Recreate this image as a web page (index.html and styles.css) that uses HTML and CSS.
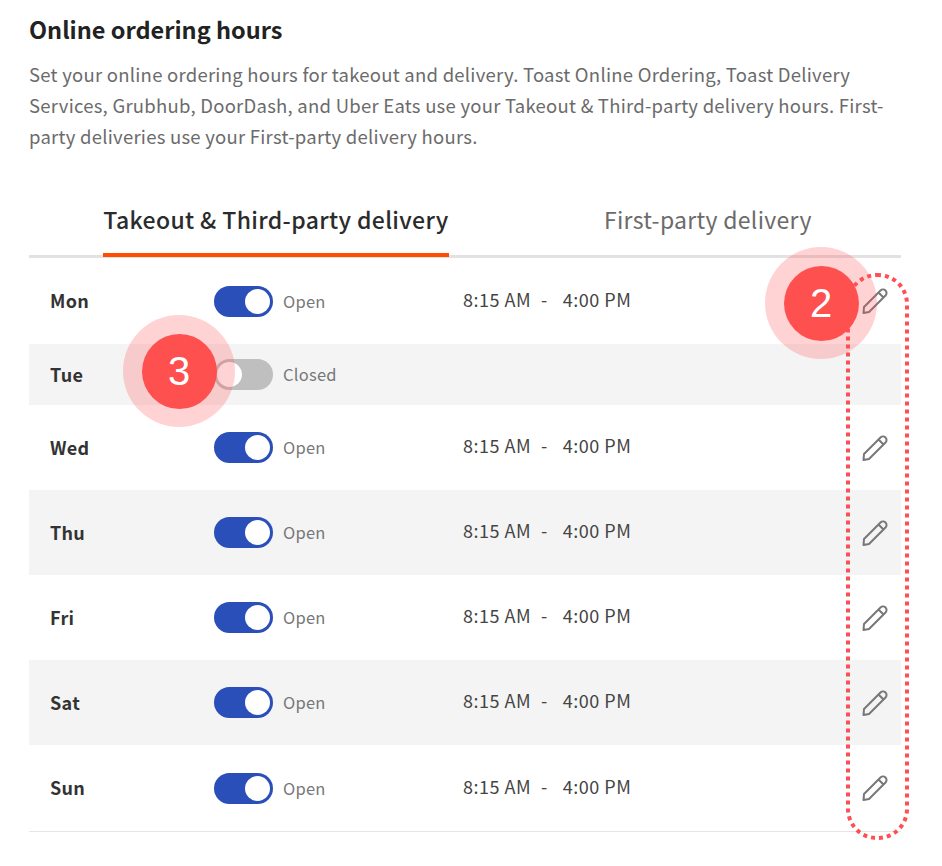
FILE: index.html
```html
<!DOCTYPE html>
<html lang="en">

<head>
    <meta charset="UTF-8">
    <meta name="viewport" content="width=device-width, initial-scale=1.0">
    <title>Online ordering hours</title>
    <link rel="stylesheet" href="styles.css">
</head>

<body>
    <div class="content">
        <h2>Online ordering hours</h2>
        <p class="intro">Set your online ordering hours for takeout and delivery. Toast Online Ordering, Toast Delivery Services, Grubhub, DoorDash, and Uber Eats use your Takeout &amp; Third-party delivery hours. First-party deliveries use your First-party delivery hours.</p>

        <div class="tabs">
            <div class="tab active">Takeout &amp; Third-party delivery</div>
            <div class="tab">First-party delivery</div>
        </div>

        <div class="hours">
            <div class="row">
                <span class="day">Mon</span>
                <div class="status"><span class="toggle on"></span><span class="status-text">Open</span></div>
                <div class="times"><span>8:15 AM</span><span class="dash">-</span><span>4:00 PM</span></div>
                <svg class="pencil" viewBox="0 0 26 26"><path d="M1.5 25 L2 19 L18.5 2.5 a3.2 3.2 0 0 1 5 5 L7 24 Z M16.5 4.5 L21.5 9.5" /></svg>
            </div>
            <div class="row closed">
                <span class="day">Tue</span>
                <div class="status"><span class="toggle"></span><span class="status-text">Closed</span></div>
            </div>
            <div class="row">
                <span class="day">Wed</span>
                <div class="status"><span class="toggle on"></span><span class="status-text">Open</span></div>
                <div class="times"><span>8:15 AM</span><span class="dash">-</span><span>4:00 PM</span></div>
                <svg class="pencil" viewBox="0 0 26 26"><path d="M1.5 25 L2 19 L18.5 2.5 a3.2 3.2 0 0 1 5 5 L7 24 Z M16.5 4.5 L21.5 9.5" /></svg>
            </div>
            <div class="row">
                <span class="day">Thu</span>
                <div class="status"><span class="toggle on"></span><span class="status-text">Open</span></div>
                <div class="times"><span>8:15 AM</span><span class="dash">-</span><span>4:00 PM</span></div>
                <svg class="pencil" viewBox="0 0 26 26"><path d="M1.5 25 L2 19 L18.5 2.5 a3.2 3.2 0 0 1 5 5 L7 24 Z M16.5 4.5 L21.5 9.5" /></svg>
            </div>
            <div class="row">
                <span class="day">Fri</span>
                <div class="status"><span class="toggle on"></span><span class="status-text">Open</span></div>
                <div class="times"><span>8:15 AM</span><span class="dash">-</span><span>4:00 PM</span></div>
                <svg class="pencil" viewBox="0 0 26 26"><path d="M1.5 25 L2 19 L18.5 2.5 a3.2 3.2 0 0 1 5 5 L7 24 Z M16.5 4.5 L21.5 9.5" /></svg>
            </div>
            <div class="row">
                <span class="day">Sat</span>
                <div class="status"><span class="toggle on"></span><span class="status-text">Open</span></div>
                <div class="times"><span>8:15 AM</span><span class="dash">-</span><span>4:00 PM</span></div>
                <svg class="pencil" viewBox="0 0 26 26"><path d="M1.5 25 L2 19 L18.5 2.5 a3.2 3.2 0 0 1 5 5 L7 24 Z M16.5 4.5 L21.5 9.5" /></svg>
            </div>
            <div class="row">
                <span class="day">Sun</span>
                <div class="status"><span class="toggle on"></span><span class="status-text">Open</span></div>
                <div class="times"><span>8:15 AM</span><span class="dash">-</span><span>4:00 PM</span></div>
                <svg class="pencil" viewBox="0 0 26 26"><path d="M1.5 25 L2 19 L18.5 2.5 a3.2 3.2 0 0 1 5 5 L7 24 Z M16.5 4.5 L21.5 9.5" /></svg>
            </div>
        </div>
    </div>

    <!-- annotation layer -->
    <svg class="dotted-box" viewBox="0 0 66 570"><rect x="2" y="2" width="59" height="563" rx="29" /></svg>
    <div class="marker marker-2"><span>2</span></div>
    <div class="marker marker-3"><span>3</span></div>
</body>

</html>
```

FILE: styles.css
```css
body {
    margin: 0;
    font-family: 'Noto Sans CJK SC', 'Noto Sans', sans-serif;
    background-color: #ffffff;
    position: relative;
    height: 866px;
    overflow: hidden;
}

.content {
    padding: 13px 41px 0 29px;
}

h2 {
    margin: 0;
    font-size: 23.5px;
    line-height: 32px;
    font-weight: 700;
    color: #222222;
}

.intro {
    margin: 14px 0 0;
    font-size: 18.5px;
    line-height: 31px;
    letter-spacing: 0.25px;
    color: #6b6b6b;
}

.tabs {
    display: flex;
    margin-top: 42px;
    height: 61px;
    border-bottom: 3px solid #e2e2e2;
    font-size: 23px;
    white-space: nowrap;
}

.tab {
    height: 63px;
    box-sizing: border-box;
    padding-top: 8px;
    color: #6b6b6b;
    letter-spacing: 0.3px;
}

.tab:first-child {
    margin-left: 74px;
    width: 346px;
    text-align: center;
}

.tab:last-child {
    margin-left: 155px;
}

.tab.active {
    font-weight: 500;
    letter-spacing: 0.36px;
    color: #2b2b2b;
    border-bottom: 4px solid #ff4c00;
    position: relative;
}

.hours {
    border-bottom: 1px solid #e6e6e6;
}

.row {
    display: flex;
    align-items: center;
    height: 85px;
    padding-left: 21px;
}

.row:first-child,
.row:last-child {
    height: 86px;
}

.row:nth-child(even) {
    background-color: #f4f4f4;
}

.row.closed {
    height: 61px;
}

.day {
    width: 164px;
    padding-bottom: 2px;
    font-size: 18px;
    font-weight: 600;
    letter-spacing: 0.3px;
    color: #333333;
}

.status {
    width: 249px;
    display: flex;
    align-items: center;
    gap: 10px;
}

.status-text {
    padding-bottom: 1px;
    font-size: 16.5px;
    letter-spacing: 0.25px;
    color: #777777;
}

.toggle {
    display: block;
    position: relative;
    width: 59px;
    height: 31px;
    border-radius: 16px;
    background-color: #bfbfbf;
}

.toggle::after {
    content: "";
    position: absolute;
    top: 3px;
    left: 3px;
    width: 25px;
    height: 25px;
    border-radius: 50%;
    background-color: #ffffff;
}

.toggle.on {
    background-color: #2b4fb9;
}

.toggle.on::after {
    left: 31px;
}

.times {
    display: flex;
    gap: 10px;
    padding-bottom: 5px;
    font-size: 18px;
    letter-spacing: 0.5px;
    color: #444444;
}

.dash {
    margin-right: 5px;
}

.pencil {
    width: 26px;
    height: 26px;
    margin-left: auto;
    margin-right: 13px;
    fill: none;
    stroke: #777777;
    stroke-width: 2;
    stroke-linejoin: round;
}

.dotted-box {
    position: absolute;
    left: 846px;
    top: 273px;
    width: 66px;
    height: 570px;
    fill: none;
    stroke: #ff4f55;
    stroke-width: 4;
    stroke-dasharray: 4 4;
}

.marker {
    position: absolute;
    width: 112px;
    height: 112px;
    border-radius: 50%;
    background-color: rgba(255, 80, 80, 0.25);
    display: flex;
    align-items: center;
    justify-content: center;
}

.marker span {
    width: 75px;
    height: 75px;
    border-radius: 50%;
    background-color: #ff5050;
    color: #ffffff;
    font-family: 'Liberation Sans', Arial, sans-serif;
    font-size: 40px;
    line-height: 75px;
    text-align: center;
}

.marker-2 {
    left: 765px;
    top: 247px;
}

.marker-3 {
    left: 123px;
    top: 315px;
}
```
